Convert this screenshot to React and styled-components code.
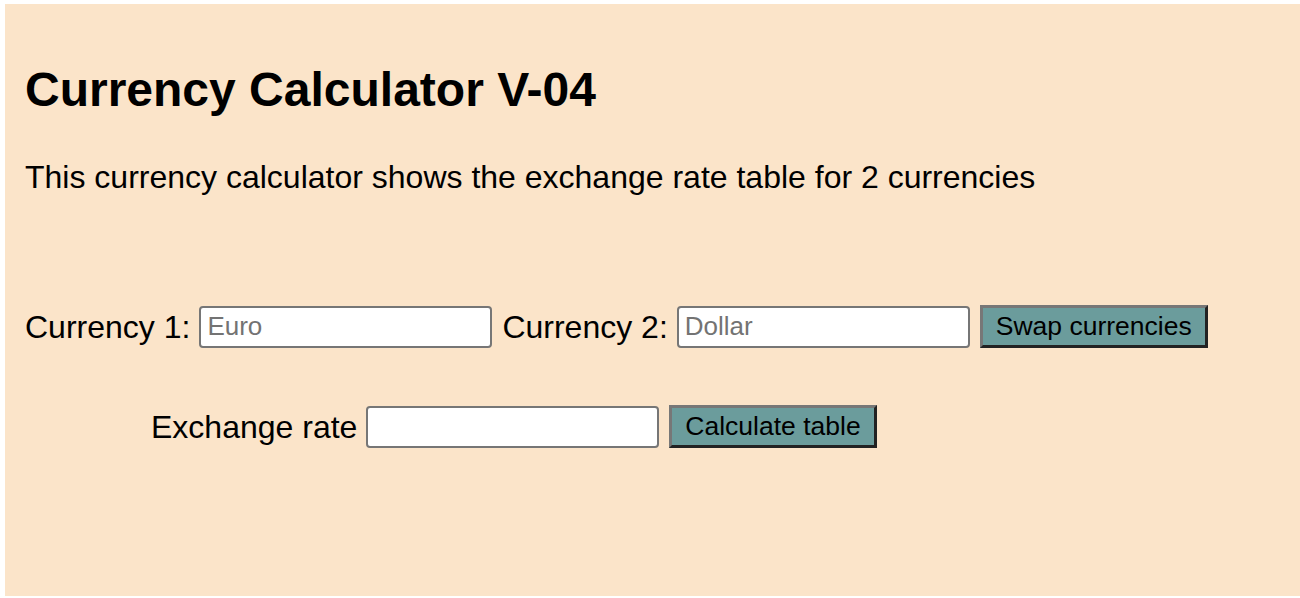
import React from "react";
import styled, { createGlobalStyle } from "styled-components";

const GlobalStyle = createGlobalStyle`
  html, body {
    margin: 0;
    padding: 0;
    background: #ffffff;
  }
  body {
    font-family: "Liberation Sans", Arial, sans-serif;
    color: #000;
  }
`;

const Page = styled.div`
  padding: 4px 0 2px 5px;
  height: 598px;
  box-sizing: border-box;
`;

const Panel = styled.main`
  background: #fbe4c9;
  height: 100%;
  padding: 0 20px;
  box-sizing: border-box;
  overflow: hidden;
`;

const Title = styled.h1`
  font-size: 48px;
  font-weight: bold;
  margin: 58px 0 0;
  line-height: 56px;
`;

const Intro = styled.p`
  font-size: 32px;
  margin: 40px 0 0;
  line-height: 38px;
`;

const Row = styled.div`
  display: flex;
  align-items: center;
  gap: 10px;
  margin-top: ${(p) => p.$top}px;
  margin-left: ${(p) => p.$indent || 0}px;
`;

const Label = styled.label`
  font-size: 32px;
  line-height: 38px;
  margin-right: -1px;
`;

const Field = styled.input`
  width: 293px;
  height: 42px;
  box-sizing: border-box;
  border: 2px solid #767676;
  border-radius: 4px;
  background: #fff;
  padding: 0 6px;
  font-family: "Liberation Sans", Arial, sans-serif;
  font-size: 26px;
  &::placeholder {
    color: #737373;
  }
`;

const Button = styled.button`
  height: 43px;
  box-sizing: border-box;
  padding: 0 13px;
  background: #6b9c9c;
  border: 3px solid;
  border-color: #777 #222 #222 #777;
  font-family: "Liberation Sans", Arial, sans-serif;
  font-size: 26.5px;
  color: #000;
`;

export default function App() {
  return (
    <>
      <GlobalStyle />
      <Page>
        <Panel>
          <Title>Currency Calculator V-04</Title>
          <Intro>
            This currency calculator shows the exchange rate table for 2
            currencies
          </Intro>
          <Row $top={109}>
            <Label>Currency 1:</Label>
            <Field placeholder="Euro" />
            <Label>Currency 2:</Label>
            <Field placeholder="Dollar" />
            <Button>Swap currencies</Button>
          </Row>
          <Row $top={57} $indent={126}>
            <Label>Exchange rate</Label>
            <Field />
            <Button>Calculate table</Button>
          </Row>
        </Panel>
      </Page>
    </>
  );
}
